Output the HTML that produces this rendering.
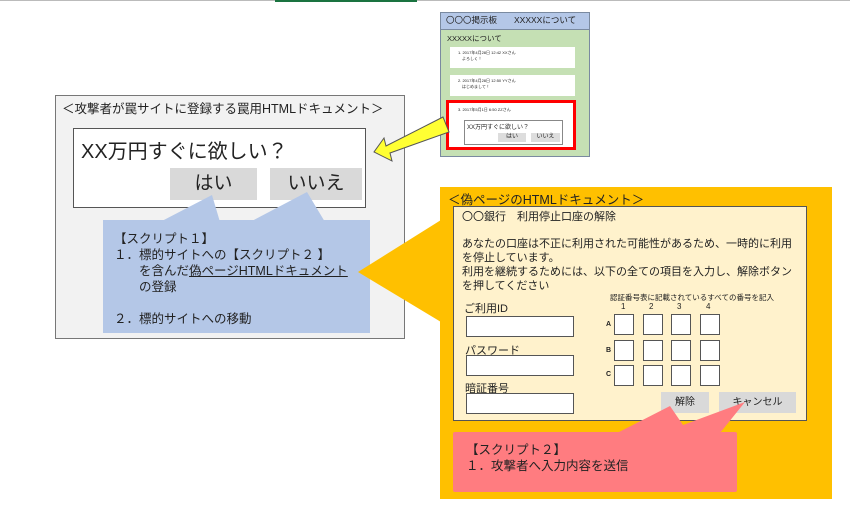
<!DOCTYPE html>
<html><head><meta charset="utf-8"><style>
*{margin:0;padding:0;box-sizing:border-box}
body{width:850px;height:510px;background:#fff;position:relative;overflow:hidden;font-family:"Liberation Sans","Noto Sans CJK JP",sans-serif;color:#222}
.a{position:absolute}
.t{white-space:nowrap}
</style></head><body>
<div class="a" style="left:0;top:0;width:850px;height:1px;background:#bbb"></div>
<div class="a" style="left:275px;top:0;width:142px;height:2px;background:#1a7340"></div>

<!-- board -->
<div class="a" style="left:440px;top:12px;width:150px;height:145px;background:#c5e0b4;border:1px solid #7a8aa0"></div>
<div class="a" style="left:440px;top:12px;width:150px;height:18px;background:#b4c7e7;border:1px solid #7a8aa0"></div>
<div class="a t" style="left:446px;top:14px;font-size:8.5px">〇〇〇掲示板　　XXXXXについて</div>
<div class="a t" style="left:447px;top:33px;font-size:7.5px">XXXXXについて</div>
<div class="a" style="left:450px;top:47px;width:125px;height:21px;background:#fff"></div>
<div class="a t" style="left:458px;top:50px;font-size:4px;line-height:6px">1. 2017年4月28日 12:42 XXさん<br>　よろしく！</div>
<div class="a" style="left:450px;top:75px;width:125px;height:21px;background:#fff"></div>
<div class="a t" style="left:458px;top:78px;font-size:4px;line-height:6px">2. 2017年4月28日 12:50 YYさん<br>　はじめまして！</div>
<div class="a" style="left:446px;top:100px;width:130px;height:50px;background:#fff;border:3px solid #f00"></div>
<div class="a t" style="left:458px;top:107px;font-size:4px">3. 2017年5月1日 6:50 ZZさん</div>
<div class="a" style="left:464px;top:120px;width:99px;height:25px;background:#fff;border:1px solid #888"></div>
<div class="a t" style="left:467px;top:122px;font-size:6px">XX万円すぐに欲しい？</div>
<div class="a" style="left:498px;top:133px;width:28px;height:9px;background:#ddd;font-size:6px;text-align:center;line-height:9px">はい</div>
<div class="a" style="left:531px;top:133px;width:29px;height:9px;background:#ddd;font-size:6px;text-align:center;line-height:9px">いいえ</div>

<!-- left gray -->
<div class="a" style="left:55px;top:95px;width:350px;height:244px;background:#f2f2f2;border:1px solid #777"></div>
<div class="a t" style="left:62px;top:98px;font-size:12.5px">＜攻撃者が罠サイトに登録する罠用HTMLドキュメント＞</div>
<div class="a" style="left:73px;top:128px;width:293px;height:80px;background:#fff;border:1px solid #555"></div>
<div class="a t" style="left:81px;top:135px;font-size:20px">XX万円すぐに欲しい？</div>
<div class="a" style="left:170px;top:168px;width:87px;height:32px;background:#d9d9d9;font-size:19px;text-align:center;line-height:32px">はい</div>
<div class="a" style="left:270px;top:168px;width:92px;height:32px;background:#d9d9d9;font-size:19px;text-align:center;line-height:32px">いいえ</div>

<svg class="a" style="left:0;top:0" width="850" height="510">
<polygon points="160,222 212,195 220,222" fill="#b4c7e7"/>
<polygon points="250,222 307,192 325,222" fill="#b4c7e7"/>
<polygon points="443,117 449,132 390,153 392,161 374,152 384,138 386,146" fill="#ffff33" stroke="#555" stroke-width="1"/>
</svg>

<div class="a" style="left:103px;top:220px;width:267px;height:113px;background:#b4c7e7"></div>
<div class="a t" style="left:114px;top:231px;font-size:12.5px;line-height:16px">【スクリプト１】<br>１．標的サイトへの【スクリプト２ 】<br>　　を含んだ<span style="text-decoration:underline">偽ページHTMLドキュメント</span><br>　　の登録<br><br>２．標的サイトへの移動</div>

<!-- orange -->
<div class="a" style="left:440px;top:187px;width:392px;height:312px;background:#ffc000"></div>
<svg class="a" style="left:0;top:0" width="850" height="510"><polygon points="358,272 441,220 441,322" fill="#ffc000"/></svg>
<div class="a t" style="left:448px;top:189px;font-size:12.5px">＜偽ページのHTMLドキュメント＞</div>
<div class="a" style="left:453px;top:206px;width:354px;height:215px;background:#fff2cc;border:1px solid #555"></div>
<div class="a t" style="left:462px;top:210px;font-size:11px;line-height:14px">〇〇銀行　利用停止口座の解除</div>
<div class="a t" style="left:462px;top:237px;font-size:11px;line-height:14px">あなたの口座は不正に利用された可能性があるため、一時的に利用<br>を停止しています。<br>利用を継続するためには、以下の全ての項目を入力し、解除ボタン<br>を押してください</div>
<div class="a t" style="left:464px;top:300px;font-size:11px">ご利用ID</div>
<div class="a t" style="left:465px;top:342px;font-size:11px">パスワード</div>
<div class="a t" style="left:465px;top:380px;font-size:11px">暗証番号</div>
<div class="a" style="left:466px;top:316px;width:108px;height:21px;background:#fff;border:1px solid #555"></div>
<div class="a" style="left:466px;top:355px;width:108px;height:21px;background:#fff;border:1px solid #555"></div>
<div class="a" style="left:466px;top:393px;width:108px;height:21px;background:#fff;border:1px solid #555"></div>
<div class="a t" style="left:610px;top:292px;font-size:7.5px">認証番号表に記載されているすべての番号を記入</div>
<div class="a t" style="left:621px;top:302px;font-size:8px">1</div>
<div class="a t" style="left:649px;top:302px;font-size:8px">2</div>
<div class="a t" style="left:677px;top:302px;font-size:8px">3</div>
<div class="a t" style="left:706px;top:302px;font-size:8px">4</div>
<div class="a t" style="left:606px;top:321px;font-size:7px;font-weight:bold">A</div>
<div class="a t" style="left:606px;top:347px;font-size:7px;font-weight:bold">B</div>
<div class="a t" style="left:606px;top:371px;font-size:7px;font-weight:bold">C</div>
<div class="a" style="left:614px;top:314px;width:20px;height:21px;background:#fff;border:1px solid #555"></div>
<div class="a" style="left:643px;top:314px;width:20px;height:21px;background:#fff;border:1px solid #555"></div>
<div class="a" style="left:671px;top:314px;width:20px;height:21px;background:#fff;border:1px solid #555"></div>
<div class="a" style="left:700px;top:314px;width:20px;height:21px;background:#fff;border:1px solid #555"></div>
<div class="a" style="left:614px;top:340px;width:20px;height:21px;background:#fff;border:1px solid #555"></div>
<div class="a" style="left:643px;top:340px;width:20px;height:21px;background:#fff;border:1px solid #555"></div>
<div class="a" style="left:671px;top:340px;width:20px;height:21px;background:#fff;border:1px solid #555"></div>
<div class="a" style="left:700px;top:340px;width:20px;height:21px;background:#fff;border:1px solid #555"></div>
<div class="a" style="left:614px;top:365px;width:20px;height:21px;background:#fff;border:1px solid #555"></div>
<div class="a" style="left:643px;top:365px;width:20px;height:21px;background:#fff;border:1px solid #555"></div>
<div class="a" style="left:671px;top:365px;width:20px;height:21px;background:#fff;border:1px solid #555"></div>
<div class="a" style="left:700px;top:365px;width:20px;height:21px;background:#fff;border:1px solid #555"></div>
<div class="a" style="left:661px;top:392px;width:48px;height:21px;background:#d9d9d9;font-size:10px;text-align:center;line-height:21px">解除</div>
<div class="a" style="left:719px;top:392px;width:77px;height:21px;background:#d9d9d9;font-size:10px;text-align:center;line-height:21px">キャンセル</div>

<svg class="a" style="left:0;top:0" width="850" height="510"><polygon points="617,433 670,406 683,425 745,402 720,433" fill="#ff7c80"/></svg>
<div class="a" style="left:453px;top:432px;width:284px;height:60px;background:#ff7c80;border-radius:2px"></div>
<div class="a t" style="left:466px;top:442px;font-size:12.5px;line-height:16px">【スクリプト２】<br>１．攻撃者へ入力内容を送信</div>
</body></html>
